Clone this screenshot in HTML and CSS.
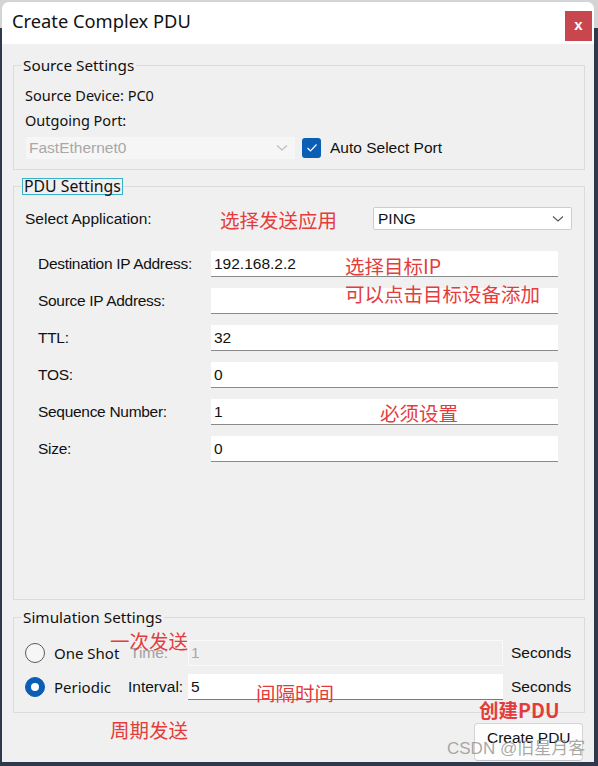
FILE: index.html
```html
<!DOCTYPE html>
<html>
<head>
<meta charset="utf-8">
<link rel="stylesheet" href="styles.css">
</head>
<body>
<div class="window">
  <div class="titlebar">
    <span class="title">Create Complex PDU</span>
    <div class="close">x</div>
  </div>
  <div class="content">
    <fieldset class="group g-source">
      <legend class="legend">Source Settings</legend>
      <div class="line l1">Source Device: PC0</div>
      <div class="line l2">Outgoing Port:</div>
      <div class="portrow">
        <div class="select disabled"><span>FastEthernet0</span>
          <svg class="chev" width="12" height="8" viewBox="0 0 12 8"><path d="M1 1.5 L6 6 L11 1.5" fill="none" stroke="#bdbdbd" stroke-width="1.1"/></svg>
        </div>
        <div class="checkbox"><svg width="12" height="10" viewBox="0 0 12 10"><path d="M1.5 5 L4.5 8 L10.5 1.5" fill="none" stroke="#fff" stroke-width="1.2"/></svg></div>
        <span class="arial">Auto Select Port</span>
      </div>
    </fieldset>

    <fieldset class="group g-pdu">
      <legend class="legend focus">PDU Settings</legend>
      <div class="approw">
        <span class="label-app">Select Application:</span>
        <div class="select app"><span>PING</span>
          <svg class="chev" width="12" height="8" viewBox="0 0 12 8"><path d="M1 1.5 L6 6 L11 1.5" fill="none" stroke="#555" stroke-width="1.1"/></svg>
        </div>
      </div>
      <div class="fields">
        <div class="frow"><span class="flabel">Destination IP Address:</span><div class="input">192.168.2.2</div></div>
        <div class="frow"><span class="flabel">Source IP Address:</span><div class="input"></div></div>
        <div class="frow"><span class="flabel">TTL:</span><div class="input">32</div></div>
        <div class="frow"><span class="flabel">TOS:</span><div class="input">0</div></div>
        <div class="frow"><span class="flabel">Sequence Number:</span><div class="input">1</div></div>
        <div class="frow"><span class="flabel">Size:</span><div class="input">0</div></div>
      </div>
    </fieldset>

    <fieldset class="group g-sim">
      <legend class="legend">Simulation Settings</legend>
      <div class="srow">
        <div class="radio"></div>
        <span class="slabel">One Shot</span>
        <span class="sub dim">Time:</span>
        <div class="sinput off">1</div>
        <span class="secs">Seconds</span>
      </div>
      <div class="srow r2">
        <div class="radio on"><div class="dot"></div></div>
        <span class="slabel">Periodic</span>
        <span class="sub int">Interval:</span>
        <div class="sinput">5</div>
        <span class="secs">Seconds</span>
      </div>
    </fieldset>

    <div class="btnrow">
      <div class="button">Create PDU</div>
    </div>
  </div>

  <div class="note n1">选择发送应用</div>
  <div class="note n2">选择目标IP</div>
  <div class="note n3">可以点击目标设备添加</div>
  <div class="note n4">必须设置</div>
  <div class="note n5">一次发送</div>
  <div class="note n6">间隔时间</div>
  <div class="note n7">周期发送</div>
  <div class="note n8">创建PDU</div>
  <div class="watermark">CSDN @旧星月客</div>
</div>
</body>
</html>
```
FILE: styles.css
```css
html, body {
  margin: 0;
  padding: 0;
}
body {
  width: 598px;
  height: 766px;
  overflow: hidden;
  background: linear-gradient(#d4d4d4 0, #d4d4d4 28px, #2e3a4c 28px);
  font-family: "Liberation Sans", Arial, sans-serif;
  color: #111;
}
.window {
  position: relative;
  margin: 2px 0 0 2px;
  width: 592px;
  height: 760px;
  background: #f0f0f0;
  border-radius: 7px 7px 0 0;
  overflow: hidden;
}
.titlebar {
  height: 42px;
  background: #fff;
  display: flex;
  align-items: flex-start;
}
.title {
  font-family: "Noto Sans", "Open Sans", sans-serif;
  font-size: 18.3px;
  margin: 7px 0 0 10px;
  line-height: 24px;
  color: #111;
}
.close {
  margin: 9px 2px 0 auto;
  width: 27px;
  height: 30px;
  background: #c8474e;
  color: #fff;
  font-family: "Liberation Sans", Arial, sans-serif;
  font-weight: bold;
  font-size: 15px;
  line-height: 28px;
  text-align: center;
}
.content {
  padding: 0 9px 0 11px;
}
.group {
  margin: 0;
  border: 1px solid #dcdcdc;
  padding: 0 11px 10px 11px;
  min-inline-size: 0;
}
.legend {
  font-family: "Noto Sans", "Open Sans", sans-serif;
  font-size: 15.3px;
  line-height: 18px;
  padding: 0 2px;
  margin-left: -4px;
  color: #111;
}
.legend.focus {
  border: 1px solid #38b2c8;
  line-height: 15px;
  padding: 0 1px;
  margin-left: -3px;
  font-size: 15.8px;
}
.g-source {
  margin-top: 12px;
}
.line {
  font-family: "Noto Sans", "Open Sans", sans-serif;
  font-size: 14.5px;
  line-height: 20px;
  height: 20px;
}
.l1 { margin-top: 11px; }
.l2 { margin-top: 5px; }
.portrow {
  margin-top: 7px;
  display: flex;
  align-items: center;
  height: 22px;
  font-size: 15.5px;
}
.select {
  position: relative;
  display: flex;
  align-items: center;
  box-sizing: border-box;
  font-size: 15.5px;
}
.select .chev {
  position: absolute;
  right: 7px;
  top: 50%;
  margin-top: -4px;
}
.select.disabled {
  margin-left: 1px;
  width: 269px;
  height: 22px;
  background: #f6f6f6;
  color: #a8a8a8;
  padding-left: 3px;
}
.checkbox {
  margin-left: 7px;
  width: 19px;
  height: 20px;
  border-radius: 3px;
  background: #0a5fb4;
  display: flex;
  align-items: center;
  justify-content: center;
}
.arial {
  margin-left: 9px;
  font-size: 15.5px;
}
.g-pdu {
  margin-top: 8px;
  padding-bottom: 137px;
}
.approw {
  margin-top: 12px;
  display: flex;
  align-items: center;
  height: 23px;
}
.label-app {
  font-size: 15.5px;
  width: 348px;
}
.select.app {
  width: 199px;
  height: 23px;
  background: #fff;
  border: 1px solid #cdcdcd;
  border-radius: 2px;
  padding-left: 4px;
  color: #111;
}
.fields {
  margin-top: 21px;
  padding-left: 13px;
  display: flex;
  flex-direction: column;
  gap: 11px;
}
.frow {
  display: flex;
  align-items: center;
  height: 26px;
}
.flabel {
  width: 173px;
  font-size: 15.5px;
  letter-spacing: -0.3px;
}
.input {
  box-sizing: border-box;
  width: 347px;
  height: 26px;
  background: #fff;
  border-bottom: 1px solid #8a8a8a;
  font-size: 15.5px;
  padding-left: 3px;
  line-height: 26px;
}
.g-sim {
  margin-top: 8px;
  padding-bottom: 12px;
}
.srow {
  margin-top: 14px;
  display: flex;
  align-items: center;
  height: 26px;
}
.srow.r2 {
  margin-top: 8px;
}
.radio {
  box-sizing: border-box;
  width: 20px;
  height: 20px;
  border-radius: 50%;
  border: 1px solid #5a5a5a;
  background: #f6f6f6;
  margin-right: 9px;
  display: flex;
  align-items: center;
  justify-content: center;
}
.radio.on {
  background: #0a5fb4;
  border-color: #0a5fb4;
}
.radio .dot {
  width: 8px;
  height: 8px;
  border-radius: 50%;
  background: #fff;
}
.slabel {
  width: 74px;
  font-family: "Noto Sans", "Open Sans", sans-serif;
  font-size: 15px;
}
.sub {
  width: 60px;
  font-size: 15.5px;
  box-sizing: border-box;
}
.sub.dim {
  color: #a0a0a0;
  padding-left: 2px;
}
.sinput {
  box-sizing: border-box;
  width: 315px;
  height: 26px;
  background: #fff;
  border-bottom: 1px solid #7a7a7a;
  font-size: 15.5px;
  padding-left: 3px;
  line-height: 26px;
}
.sinput.off {
  background: #f0f0f0;
  border: 1px solid #fafafa;
  color: #a8a8a8;
  line-height: 24px;
  padding-left: 2px;
}
.secs {
  margin-left: 8px;
  font-size: 15.5px;
}
.btnrow {
  display: flex;
  justify-content: flex-end;
  margin-top: 10px;
  padding-right: 2px;
}
.button {
  box-sizing: border-box;
  width: 109px;
  height: 38px;
  background: #fdfdfd;
  border: 1px solid #d4d4d4;
  border-bottom-color: #c4c4c4;
  border-radius: 4px;
  font-size: 15.5px;
  padding-left: 12px;
  line-height: 26px;
  padding-top: 1px;
}
.note {
  position: absolute;
  color: #e43c3c;
  font-family: "Noto Sans CJK SC", "Noto Sans", sans-serif;
  font-size: 19.5px;
  line-height: 20px;
  white-space: nowrap;
}
.n1 { left: 218px; top: 208px; }
.n2 { left: 343px; top: 254px; }
.n3 { left: 343px; top: 282px; }
.n4 { left: 378px; top: 401px; }
.n5 { left: 108px; top: 629px; }
.n6 { left: 254px; top: 681px; }
.n7 { left: 108px; top: 718px; }
.n8 { left: 477px; top: 698px; font-weight: bold; }
.watermark {
  position: absolute;
  left: 445px;
  top: 737px;
  font-family: "Liberation Sans", "Noto Sans CJK SC", sans-serif;
  font-size: 17px;
  line-height: 20px;
  color: rgba(140, 140, 140, 0.75);
  white-space: nowrap;
}
```
